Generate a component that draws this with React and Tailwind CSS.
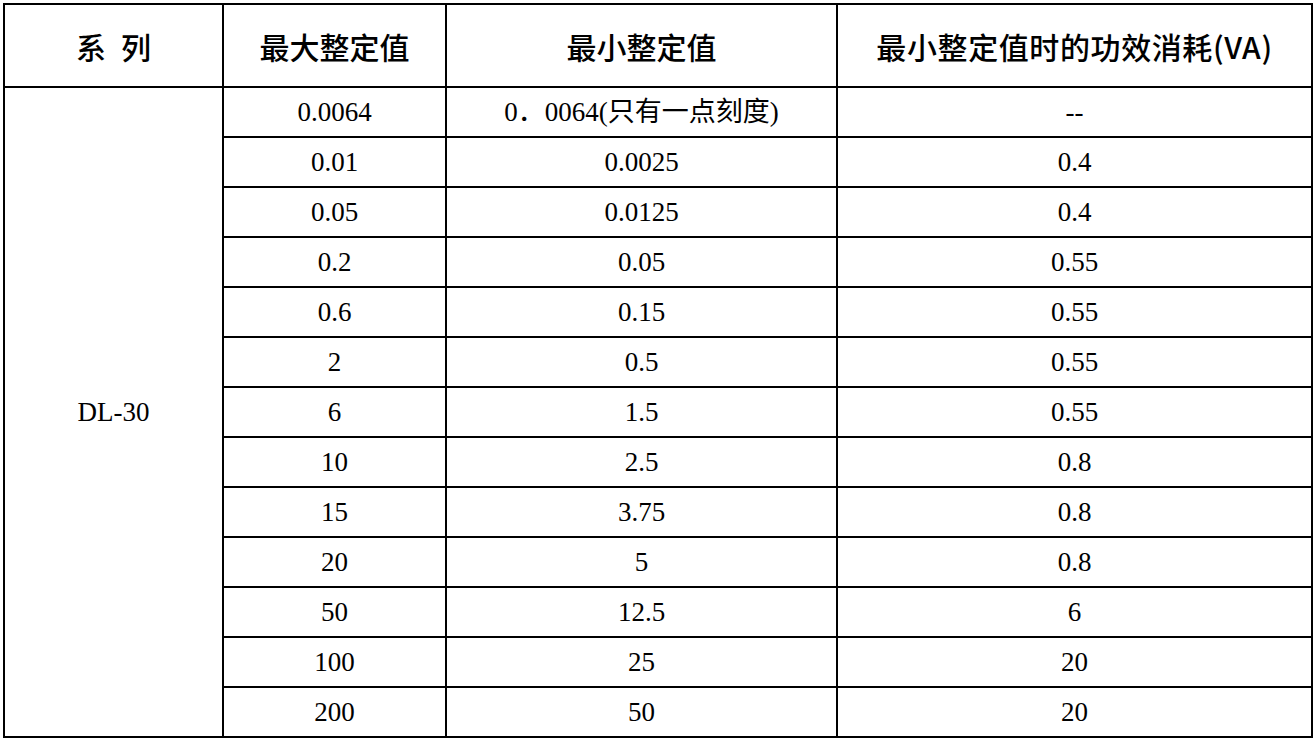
const headers = ["系\u2002列", "最大整定值", "最小整定值", "最小整定值时的功效消耗(VA)"];

const rows = [
  ["0.0064", "0．0064(只有一点刻度)", "--"],
  ["0.01", "0.0025", "0.4"],
  ["0.05", "0.0125", "0.4"],
  ["0.2", "0.05", "0.55"],
  ["0.6", "0.15", "0.55"],
  ["2", "0.5", "0.55"],
  ["6", "1.5", "0.55"],
  ["10", "2.5", "0.8"],
  ["15", "3.75", "0.8"],
  ["20", "5", "0.8"],
  ["50", "12.5", "6"],
  ["100", "25", "20"],
  ["200", "50", "20"],
];

const serif = "font-['Liberation_Serif','Noto_Sans_CJK_SC',serif]";

const App = () => {
  return (
    <div className="w-[1316px] h-[743px] bg-white pt-[3px] pl-[3px]">
      <div className="inline-grid bg-black p-[2px] gap-[2px] grid-cols-[217px_221px_389px_473px] grid-rows-[81px_repeat(13,48px)]">
        {headers.map((h, i) => (
          <div
            key={h}
            className={`bg-white flex items-center justify-center text-[30px] font-medium text-black font-['Noto_Sans_CJK_SC',sans-serif] leading-none ${
              i === 3 ? "tracking-[0.6px]" : ""
            }`}
          >
            {h}
          </div>
        ))}

        {/* series cell spanning all data rows */}
        <div
          className={`bg-white row-span-13 flex items-center justify-center text-[27px] text-black ${serif}`}
        >
          DL-30
        </div>

        {rows.map((r, i) =>
          r.map((c, j) => (
            <div
              key={`${i}-${j}`}
              className={`bg-white flex items-center justify-center pt-[1px] text-[27px] text-black leading-none ${serif}`}
            >
              {c}
            </div>
          ))
        )}
      </div>
    </div>
  );
};

export default App;
